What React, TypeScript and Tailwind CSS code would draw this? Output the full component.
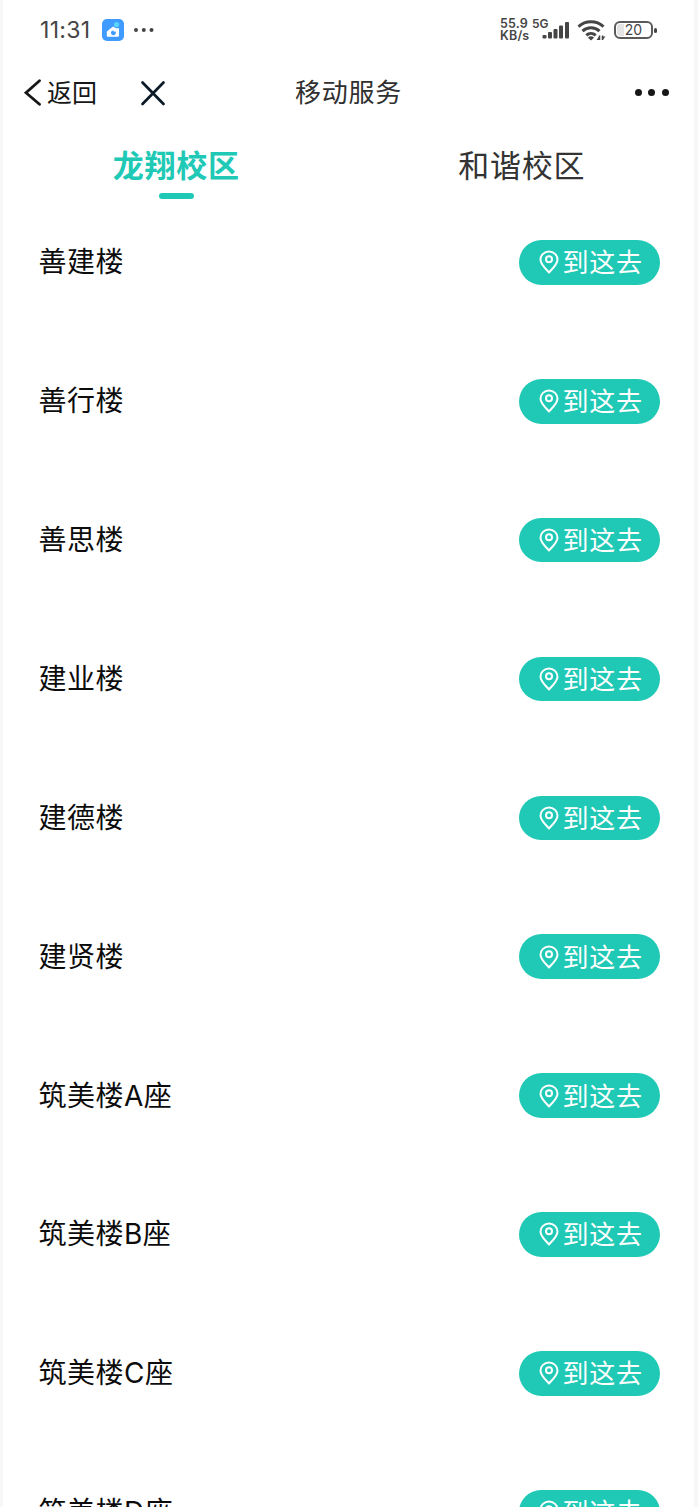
import { useState } from "react";

const campuses = [
  {
    name: "龙翔校区",
    buildings: [
      "善建楼",
      "善行楼",
      "善思楼",
      "建业楼",
      "建德楼",
      "建贤楼",
      "筑美楼A座",
      "筑美楼B座",
      "筑美楼C座",
      "筑美楼D座",
    ],
  },
  { name: "和谐校区", buildings: [] },
];

function StatusBar() {
  return (
    <div className="flex h-[60px] items-center justify-between pl-[37px] pr-[41px] font-[Inter,sans-serif] text-[#454545]">
      <div className="flex items-center">
        <span className="w-[62px] text-[23px] leading-none tracking-[0.3px]">11:31</span>
        <svg className="h-[22px] w-[22px]" viewBox="0 0 22 22">
          <rect width="22" height="22" rx="5" fill="#3f9bff" />
          <circle cx="14.6" cy="5.6" r="2.6" fill="#55d6f7" />
          <path d="M4.8 12.5 11 7.6l3 1.7h3v7.4a1 1 0 0 1-1 1H5.8a1 1 0 0 1-1-1z" fill="#fff" />
          <path d="M11.5 11.2v1.3h2.1a2.5 2.5 0 1 1-4.2-.3z" fill="#3f9bff" />
        </svg>
        <svg className="ml-[9px] h-[6px] w-[22px]" viewBox="0 0 22 6" fill="currentColor">
          <circle cx="3" cy="3" r="2" />
          <circle cx="10.8" cy="3" r="2" />
          <circle cx="18.5" cy="3" r="2" />
        </svg>
      </div>

      <div className="flex h-6 items-start">
        <div className="w-[32px] whitespace-nowrap text-[12.5px] font-semibold leading-[12px] tracking-[0.2px]">
          <p>55.9</p>
          <p>KB/s</p>
        </div>
        <div className="relative h-6 w-[39px]">
          <span className="absolute left-0 top-0 text-[12px] font-semibold leading-[12px]">5G</span>
          <svg className="absolute left-0 top-0" width="39" height="24" viewBox="0 0 39 24" fill="currentColor">
            <rect x="10.5" y="17" width="4" height="3.5" rx="1" />
            <rect x="16" y="14" width="4" height="6.5" rx="1" />
            <rect x="21.5" y="11" width="4" height="9.5" rx="1" />
            <rect x="27" y="7.5" width="4" height="13" rx="1" />
            <rect x="33" y="4" width="4" height="16.5" rx="1" />
          </svg>
        </div>
        <svg className="ml-1.5" width="30" height="24" viewBox="0 0 30 24" fill="none" stroke="currentColor" strokeWidth="3">
          <path d="M1.5 8.7a18.5 18.5 0 0 1 25 0" />
          <path d="M5.5 13.2a12.5 12.5 0 0 1 17 0" />
          <path d="M9.3 17.3a7 7 0 0 1 9.4 0" />
          <path d="m14 22.5-3-2.8a4 4 0 0 1 6 0z" fill="currentColor" stroke="none" />
          <path d="M22.5 17.5V22M25.5 17.5V22" strokeWidth="1.5" />
          <path d="m19.5 22 2.5-3.5V22zM28.5 18.5l-2.5 3v-3z" fill="currentColor" stroke="none" />
        </svg>
        <div className="relative ml-[7px] mt-[2.5px] flex h-[18px] w-[39px] items-center justify-center rounded-[6px] border-2 border-[#5a5a5a] bg-[linear-gradient(90deg,#e4e4e4_8px,transparent_8px)] bg-clip-content p-px">
          <span className="text-[14px] leading-none">20</span>
          <i className="absolute -right-[5.5px] top-[5px] h-[5px] w-[2.5px] rounded-sm bg-[#454545]" />
        </div>
      </div>
    </div>
  );
}

function NavBar() {
  return (
    <div className="grid h-[66px] grid-cols-3 items-center text-[#171717]">
      <div className="flex items-center pl-5">
        <svg width="19" height="28" viewBox="0 0 19 28" fill="none" stroke="currentColor" strokeWidth="2.8" strokeLinecap="round">
          <path d="M16.5 1.7 3 13.7l13.5 11.6" />
        </svg>
        <span className="ml-[5px] whitespace-nowrap pb-[3px] text-[25px] leading-none">返回</span>
        <svg className="ml-[43px] shrink-0" width="26" height="26" viewBox="0 0 26 26" fill="none" stroke="#0b1a26" strokeWidth="2.7" strokeLinecap="round">
          <path d="m2.5 2.5 21 21.5M23.5 2.5l-21 21.5" />
        </svg>
      </div>
      <h1 className="pb-[4px] text-center text-[26px] leading-none tracking-[0.7px] text-[#303030]">移动服务</h1>
      <div className="flex justify-end gap-[6.5px] pb-px pr-[25px]">
        <i className="h-[7px] w-[7px] rounded-full bg-[#171717]" />
        <i className="h-[7px] w-[7px] rounded-full bg-[#171717]" />
        <i className="h-[7px] w-[7px] rounded-full bg-[#171717]" />
      </div>
    </div>
  );
}

function GoButton() {
  return (
    <button className="flex h-[44.5px] w-[141px] items-center rounded-full bg-[#20c9b5] pl-5 text-white">
      <svg width="20" height="24" viewBox="0 0 20 24" fill="none" stroke="currentColor" strokeWidth="2">
        <path d="M10 22.5C7 19 1.5 14.2 1.5 9.7a8.5 8.2 0 0 1 17 0c0 4.5-5.5 9.3-8.5 12.8z" strokeLinejoin="round" />
        <circle cx="10" cy="9.2" r="3" />
      </svg>
      <span className="ml-[4px] whitespace-nowrap pb-[2px] text-[26px] leading-none tracking-[0.7px]">到这去</span>
    </button>
  );
}

export default function App() {
  const [active, setActive] = useState(0);

  return (
    <div className="h-[1510px] overflow-hidden bg-white font-['Noto_Sans_CJK_SC',sans-serif]">
      <div className="h-[1507px] overflow-hidden border-l-[3px] border-r-[4px] border-[#f7f7f7]">
        <StatusBar />
        <NavBar />

        {/* Campus tabs */}
        <div className="grid h-[67px] grid-cols-2">
          {campuses.map((campus, i) => (
            <button key={campus.name} onClick={() => setActive(i)} className="flex flex-col items-center pl-px pt-[22px]">
              <span
                className={`text-[31px] leading-none tracking-[0.8px] ${
                  active === i ? "font-bold text-[#20c9b5]" : "text-[#333]"
                }`}
              >
                {campus.name}
              </span>
              {active === i && <span className="mt-[14px] h-[5.5px] w-[35px] rounded-full bg-[#20c9b5]" />}
            </button>
          ))}
        </div>

        {/* Building list */}
        <ul>
          {campuses[active].buildings.map((name) => (
            <li key={name} className="flex h-[138.87px] items-center justify-between pl-[35.5px] pr-[34.5px]">
              <span className="text-[28px] leading-none tracking-[0.5px] text-[#0c0c0c] font-[Inter,'Noto_Sans_CJK_SC',sans-serif]">{name}</span>
              <GoButton />
            </li>
          ))}
        </ul>
      </div>
    </div>
  );
}
